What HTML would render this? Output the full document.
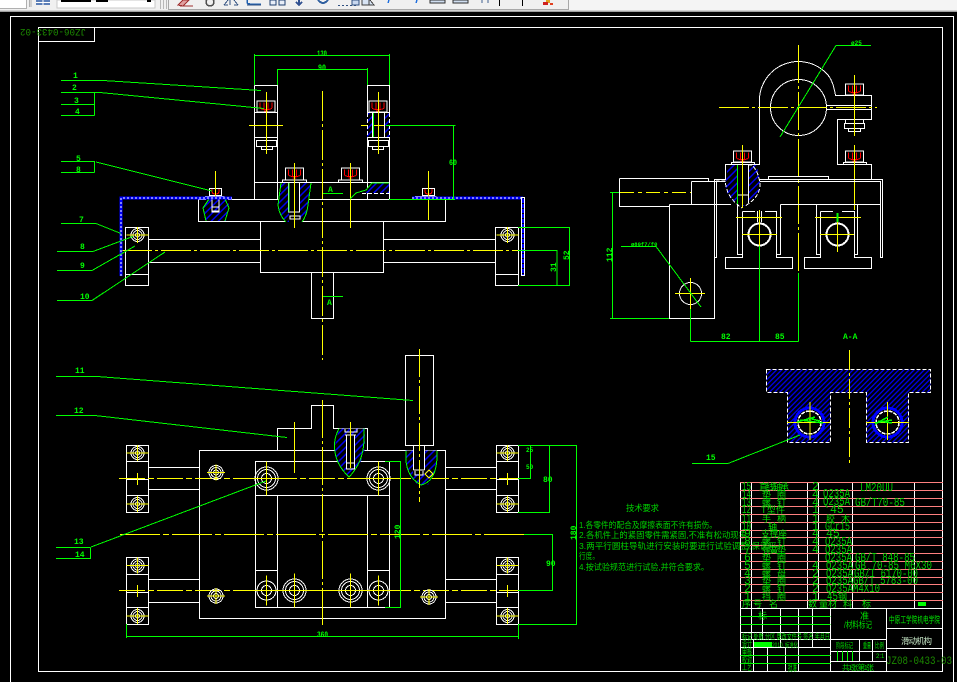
<!DOCTYPE html>
<html><head><meta charset="utf-8"><title>CAD</title>
<style>
html,body{margin:0;padding:0;background:#000;width:957px;height:682px;overflow:hidden}
svg{display:block;position:absolute;left:0;top:0}
.w{stroke:#fff;fill:none}
.g{stroke:#0f0;fill:none}
.y{stroke:#ff0;fill:none}
.r{stroke:#f00;fill:none}
.p{stroke:#ff8080;fill:none}
.bd{stroke:#fff;fill:none;stroke-dasharray:4 2}
text{font-family:"Liberation Mono","Noto Sans CJK SC",monospace;fill:#00e000;font-size:9px}
.c{font-family:"Liberation Sans","Noto Sans CJK SC",sans-serif;font-size:9px;fill:#00e000}
.t{font-size:8.5px;font-family:"Liberation Sans","Noto Sans CJK SC",sans-serif;fill:#00d000}
.s{font-size:8px;fill:#00ff00;font-weight:bold}
.m{font-size:11.5px;fill:#00d000}
</style></head><body>
<svg width="957" height="682" viewBox="0 0 957 682" xmlns="http://www.w3.org/2000/svg" shape-rendering="crispEdges">
<defs>
<pattern id="h" width="5" height="5" patternUnits="userSpaceOnUse" patternTransform="rotate(45)"><rect width="5" height="5" fill="#000"/><rect width="1.6" height="5" fill="#0000f0"/></pattern>
<pattern id="h2" width="3.6" height="3.6" patternUnits="userSpaceOnUse" patternTransform="rotate(45)"><rect width="3.6" height="3.6" fill="#000008"/><rect width="1.3" height="3.6" fill="#0000e0"/></pattern>
<g id="b"><rect class="w" x="-9" y="0" width="18" height="11"/><path class="r" d="M-6 1.500v5q0 2 6 2t6-2v-5M-2 1.500v7M2 1.500v7M-2 10h4"/></g>
<g id="bw"><rect class="w" x="-9" y="0" width="18" height="12"/><path class="w" d="M-12 14.500V12H12V14.500"/><path class="r" d="M-6 1.500v5q0 2 6 2t6-2v-5M-2 1.500v7M2 1.500v7M-2 10h4"/></g>
<g id="c1"><circle class="w" r="11.500"/><circle class="w" r="9"/><circle class="w" r="5"/><path class="y" d="M-17 0H17M0-17V17"/></g>
<g id="c2"><circle class="w" r="9.500"/><circle class="w" r="5"/><path class="y" d="M-17 0H17M0-15V15"/></g>
<g id="c3"><circle class="w" r="6.500"/><circle class="w" r="4.500"/><circle class="w" r="2"/><path class="y" d="M-11 0H11M0-8V8"/></g>
<g id="c4"><circle class="w" r="7"/><circle class="w" r="5"/><circle class="w" r="2.500"/><path class="y" d="M-9 0H9M0-8V8"/></g>
</defs>
<rect width="957" height="682" fill="#000"/>

<!-- toolbar -->
<rect width="957" height="11" fill="#f0f0f0"/>
<rect y="10" width="957" height="1" fill="#d0d0d0"/>
<rect y="11" width="957" height="1" fill="#a0a0a0"/>
<rect x="0" y="0" width="26" height="8" fill="#fff"/>
<path d="M26.500 0V8.500H0M29.500 0V7M31 0V7" stroke="#b0b0b0" fill="none"/>
<rect x="36" y="0" width="14" height="5" fill="#5c7fb8"/><path d="M36 2.500H50M43 0V5" stroke="#fff"/>
<rect x="57" y="0" width="98" height="8" fill="#fff" stroke="#c8c8c8"/>
<rect x="61" y="0" width="30" height="2" fill="#000"/><rect x="96" y="0" width="12" height="2" fill="#000"/><rect x="147" y="0" width="4" height="2" fill="#000"/>
<path d="M160.500 0V9M163.500 0V9M166.500 0V9" stroke="#b8b8b8"/>
<path d="M168.500 0V9.500H568.500V0" stroke="#a8a8a8" fill="#f0f0f0"/>
<rect x="569" y="0" width="388" height="10" fill="#f4f4f4"/>
<path d="M178 5l5-5h6l-6 6zM180 6h13" stroke="#a03030" fill="#e0a0a0"/>
<circle cx="210" cy="2" r="4" fill="none" stroke="#505050" stroke-width="1.500"/><path d="M224 5l4-5M230 0v5M234 0l4 5M224 5h4M234 5h4" stroke="#305080" fill="none"/>
<path d="M247 0v2q0 2 3 2h11" stroke="#2060b0" fill="none" stroke-width="1.500"/><path d="M247 5h14" stroke="#305080"/>
<rect x="270" y="0" width="6" height="5" fill="#e8eef8" stroke="#204070"/><rect x="279" y="0" width="6" height="5" fill="#e8eef8" stroke="#204070"/>
<path d="M299 0v4M296 2l3 3 3-3" stroke="#305090" fill="none" stroke-width="2"/>
<path d="M318 0q5 6 10 0" stroke="#3060a0" fill="none" stroke-width="2"/>
<path d="M338 5.500h20" stroke="#305080" stroke-dasharray="2 2"/><rect x="352" y="0" width="7" height="5" fill="#c8d8f0" stroke="#305080"/>
<path d="M362 0v5h7V0M370 0l4 5h-5" stroke="#404040" fill="#d8e4f4"/>
<path d="M389 0l-1 3M417 0l-1 3" stroke="#2070e0" stroke-width="1.500"/>
<rect x="430" y="0" width="15" height="3" fill="#d0def0" stroke="#303030"/><rect x="453" y="0" width="15" height="3" fill="#d0def0" stroke="#303030"/>
<path d="M482 0v3M488 0v3" stroke="#406090"/>
<path d="M499.500 0v6M522.500 0v6" stroke="#000"/>
<rect x="546" y="0" width="4" height="3" fill="#e0a020"/><rect x="543" y="2" width="5" height="3" fill="#d02020"/><rect x="550" y="3" width="3" height="2" fill="#e04020"/>

<!-- frames -->
<path class="w" d="M10.500 682V16.500H953.500V682"/>
<path class="w" d="M38.500 672V27.500H942.500V671.500H38.500"/>
<path class="w" d="M38.500 41.500H94.500V27.500"/>
<text x="0" y="0" transform="translate(86 29) rotate(180)" style="font-size:10.500px;fill:#1c8a00" textLength="66" lengthAdjust="spacingAndGlyphs">JZ06-0433-02</text>

<!-- TOP VIEW -->
<path class="w" d="M254.500 85.500H277.500V199.500M254.500 85.500V199.500M367.500 199.500V85.500H389.500V199.500M254.500 182.500H389.500"/>
<path class="w" d="M254.500 112.500H277.500M254.500 137.500H277.500M367.500 112.500H389.500M367.500 137.500H389.500"/>
<path class="w" d="M198.500 199.500H445.500V221.500H198.500ZM260.500 221.500H383.500V272.500H260.500ZM311.500 272.500H333.500V318.500H311.500Z"/>
<path class="w" d="M148.500 239.500H260.500M148.500 262.500H260.500M383.500 239.500H495.500M383.500 262.500H495.500"/>
<path class="w" d="M125.500 227.500H148.500V285.500H125.500ZM125.500 274.500H148.500M495.500 227.500H518.500V285.500H495.500ZM495.500 274.500H518.500"/>
<path class="w" d="M256.500 140.500h20v6h-20zM261.500 146.500v3h11v-3M368.500 140.500h20v6h-20zM372.500 146.500v3h11v-3"/>
<use href="#b" x="266" y="101"/><use href="#b" x="378" y="101"/>
<use href="#bw" x="294.500" y="168"/><use href="#bw" x="350.500" y="168"/>
<path class="y" d="M266.500 92V154M249 125.500H283M378.500 92V154M361 125.500H395M350.500 163V228"/>
<path class="w" d="M209.500 188.500h12v7h-12zM205.500 199V196.500H224V199M422.500 188.500h12v7h-12zM415.500 199V196.500H436V199"/>
<path class="r" d="M212 189v2q0 3 3.500 3t3.500-3v-2M425 189v2q0 3 3.500 3t3.500-3v-2"/>
<path class="y" d="M215.500 171V221M428.500 171V220"/>
<!-- hatched blobs -->
<path d="M203 205l4-7H228l1 8-3 15H206Z" fill="url(#h)"/>
<path class="g" d="M209 199L203 208 206 221M225 199L229 208 225 221"/>
<path class="w" d="M212 197V211h7V197M212 207h7v5h-7z"/>
<path d="M281 183H311L308 205q-1 10-6 17H286q-8-6-8-17Z" fill="url(#h)"/>
<path class="g" d="M281 183L278 205q1 10 8 17M311 183L308 205q-1 10-6 17"/>
<rect x="289" y="183" width="11" height="40" fill="#000"/>
<path class="w" d="M288.500 183V212h11V183M290 216h10v3h-10z"/>
<path class="y" d="M294.500 163V228"/>
<path class="g" d="M289 183V212"/>
<path d="M362 193L372 183H389V193Z" fill="url(#h)"/>
<path class="g" d="M350 199L356 193 366 190 372 183H389"/>
<path class="w" d="M362 193.500H389.500" stroke-dasharray="4 2"/>
<path d="M367 113H373V137H367ZM384 113H390V137H384Z" fill="url(#h)"/>
<path class="w" d="M372.500 112V137M384.500 112V137"/>
<path class="g" d="M373.500 113V137"/>
<path d="M367.500 113V137M389.500 113V137" stroke="#fff" stroke-dasharray="4 2" fill="none"/>
<!-- centre lines -->
<path class="y" d="M322.500 91V360" stroke-dasharray="30 3 3 3"/>
<path class="y" d="M122 250.500H520" stroke-dasharray="30 3 3 3"/>
<use href="#c3" x="137.500" y="235"/>
<use href="#c3" x="507.500" y="235"/>
<!-- blue dashed L -->
<path d="M121 276V198H232M412 198H523" stroke="#0000ff" stroke-width="3" fill="none"/>
<path d="M121 276V198H232M412 198H523" stroke="#fff" stroke-width="1" stroke-dasharray="2 2" fill="none"/>
<path d="M523 199V275" stroke="#0000ff" stroke-width="2" stroke-dasharray="4 1"/>
<path class="w" d="M521.500 197.500H524.500V275.500H521.500Z"/>

<!-- top view green -->
<path class="g" d="M254.500 54V85M389.500 54V85M254.500 55.500H389.500M277.500 69V85M367.500 68V85M277.500 69.500H367.500"/>
<path class="g" d="M61 80.500H103L261 90.500M61 92.500H100L264 108.500M61 104.500H94.500M61 115.500H94.500M94.500 92.500V115.500"/>
<path class="g" d="M61 161.500H95M61 172.500H94.500M94.500 161.500V172.500M96 162L212 191"/>
<path class="g" d="M61 223.500H96L121 233.500M57 251.500H93L133 236.500M57 270.500H92L135 246M57 300.500H92L165 252"/>
<path class="g" d="M323 193.500H343M323 296.500H343"/>
<path class="g" d="M386 125.500H455.500M453.500 125.500V199.500M389 199.500H455"/>
<text class="s" x="73" y="78">1</text><text class="s" x="72" y="90">2</text><text class="s" x="74" y="103">3</text><text class="s" x="75" y="114">4</text>
<text class="s" x="76" y="161">5</text><text class="s" x="76" y="172">8</text><text class="s" x="79" y="222">7</text>
<text class="s" x="80" y="249">8</text><text class="s" x="80" y="268">9</text><text class="s" x="80" y="299">10</text>
<text class="s" x="317" y="56" textLength="10" lengthAdjust="spacingAndGlyphs">130</text><text class="s" x="318" y="70" textLength="8" lengthAdjust="spacingAndGlyphs">90</text><text class="s" x="328" y="192">A</text><text class="s" x="327" y="305">A</text>
<text class="s" x="449" y="165" textLength="8" lengthAdjust="spacingAndGlyphs">60</text>

<!-- right dims of top view -->
<path class="g" d="M518 227.500H569.500V285.500H518M518 250.500H557V285"/>
<text class="s" transform="translate(569 260) rotate(-90)">52</text>
<text class="s" transform="translate(556 272) rotate(-90)">31</text>

<!-- RIGHT VIEW -->
<path class="w" d="M725.500 180V164.500H759.500V103A39 39 0 0 1 827 74Q833 80 835.500 95.500H871.500V119.500H837.500V164.500H871.500V179"/>
<circle class="w" cx="798.500" cy="107.500" r="28"/>
<path class="w" d="M827 105.500H871M827 109.500H871"/>
<path class="y" d="M719 107.500H877" stroke-dasharray="30 3 3 3"/>
<path class="y" d="M798.500 45V273" stroke-dasharray="38 3 3 3"/>
<path class="g" d="M780 137L836 45.500H871"/>
<text class="s" x="851" y="45" style="font-size:6px">ø25</text>
<use href="#b" x="854.500" y="84"/><use href="#b" x="854.500" y="151"/><use href="#b" x="742.500" y="151"/>
<path class="w" d="M845.500 119.500v4h18v-4M844.500 123.500h20v5h-20zM848.500 128.500v3h12v-3M843.500 164.500V162.500H866.500V164.500M731.500 164.500V162.500H754.500V164.500"/>
<path class="y" d="M854.500 75V136M854.500 145V210"/>
<!-- bed -->
<path class="w" d="M619.500 178.500H708.500V181.500M619.500 178.500V206.500H669.500M691.500 181.500V204.500M669.500 204.500H731M669.500 204.500V318.500H714.500V179.500H882.500V257.500H880.500V181.500H691.500M716.500 181.500V257.500H714.500"/>
<path class="w" d="M768.500 179V176.500H828.500V179M780.500 204.500H880.500"/>
<path class="y" d="M620 192.500H691" stroke-dasharray="14 4 4 4"/>
<!-- bearing blocks -->
<path class="w" d="M737.500 204.500V254.500H742.500M742.500 211.500V257.500H725.500V268.500H792.500V257.500H776.500V211.500H765M742.500 211.500H755M780.500 204.500V254.500H776.500"/>
<path class="w" d="M816.500 204.500V254.500H820.500M820.500 211.500V257.500H804.500V268.500H871.500V257.500H854.500V211.500H842M820.500 211.500H833M857.500 204.500V254.500H854.500"/>
<path class="w" d="M757.500 211V222M761.500 211V222"/>
<circle cx="759.500" cy="234.500" r="11" stroke="#fff" stroke-width="2" fill="none"/>
<circle cx="837.500" cy="234.500" r="11" stroke="#fff" stroke-width="2" fill="none"/>
<path class="y" d="M736 217.500H782M742 234.500H777M759.500 210V246M815 217.500H861M820 234.500H854M837.500 222V252"/>
<path d="M837.500 213V222" stroke="#0f0" stroke-width="2"/>
<!-- section on right -->
<path d="M728 165H757L760 183Q760 196 745 206H740Q725 198 725.500 183Z" fill="url(#h)"/>
<rect x="737" y="165" width="11" height="40" fill="#000"/>
<path class="bd" d="M725.500 183Q727 198 742 208M748 165H752Q759 172 760 185Q760 197 745 206M725.500 181H716"/>
<path class="w" d="M737.500 165V203M748.500 165V203M738 195h10"/>
<path class="g" d="M737.500 165V204"/>
<path class="y" d="M742.500 145V208"/>
<!-- bottom dims right -->
<path class="g" d="M759.500 246V341.500M798.500 273V341.500M690.500 309V341.500M690.500 341.500H798.500M610 192.500H619M612.500 192.500V318.500M610 318.500H669"/>
<circle class="w" cx="690.500" cy="293.500" r="11"/>
<path class="y" d="M675 293.500H705M690.500 278V309"/>
<path class="g" d="M621 246.500H656L701 307"/>
<text class="s" x="631" y="246" style="font-size:5.500px">ø80f7/f0</text>
<text class="s" transform="translate(612 262) rotate(-90)">112</text>
<text class="s" x="721" y="339">82</text><text class="s" x="775" y="339">85</text><text class="s" x="843" y="339">A-A</text>

<!-- A-A section -->
<path d="M766.500 369.500H930.500V392.500H908.500V442.500H866.500V392.500H830.500V442.500H787.500V392.500H766.500Z" fill="url(#h2)"/>
<path d="M766.500 369.500H930.500V392.500H908.500V442.500H866.500V392.500H830.500V442.500H787.500V392.500H766.500Z" class="w" stroke-dasharray="4 2"/>
<circle cx="809.500" cy="422.500" r="14.500" stroke="#0000ff" stroke-width="3" fill="#000"/>
<circle cx="887.500" cy="422.500" r="14.500" stroke="#0000ff" stroke-width="3" fill="#000"/>
<circle cx="809.500" cy="422.500" r="11.500" stroke="#fff" stroke-dasharray="4 1" fill="none" stroke-width="1.500"/>
<circle cx="887.500" cy="422.500" r="11.500" stroke="#fff" stroke-dasharray="4 1" fill="none" stroke-width="1.500"/>
<path class="y" d="M849.500 350V464" stroke-dasharray="20 3 3 3"/>
<path class="y" d="M787 422.500H830M810 402V440M866 422.500H909M887.500 402V440"/>
<path class="g" d="M797 422L815 417M800 420L823 423M808 418l12 3M875 424L888 417M875 423L892 420M878 421l14 2" stroke-width="1.500"/>
<path class="g" d="M692 463.500H728L800 435"/>
<text class="s" x="706" y="460">15</text>

<!-- BOTTOM VIEW -->
<path class="w" d="M199.500 450.500H445.500V618.500H199.500Z"/>
<path class="w" d="M277.500 450V428.500H311.500V405.500H333.500V428.500H367.500V450"/>
<path class="w" d="M255.500 461.500H389.500V607.500H255.500ZM255.500 495.500H389.500M277.500 495.500V607.500M367.500 495.500V607.500M255.500 570.500H277.500M367.500 570.500H389.500"/>
<path class="w" d="M148.500 467.500H199.500M148.500 489.500H199.500M148.500 579.500H199.500M148.500 602.500H199.500M445.500 467.500H496.500M445.500 489.500H496.500M445.500 579.500H496.500M445.500 602.500H496.500"/>
<path class="w" d="M126.500 445.500H148.500V512.500H126.500ZM126.500 461.500H148.500M126.500 479.500H148.500M126.500 495.500H148.500M126.500 557.500H148.500V624.500H126.500ZM126.500 574.500H148.500M126.500 592.500H148.500M126.500 607.500H148.500"/>
<path class="w" d="M496.500 445.500H518.500V512.500H496.500ZM496.500 461.500H518.500M496.500 479.500H518.500M496.500 495.500H518.500M496.500 557.500H518.500V624.500H496.500ZM496.500 574.500H518.500M496.500 592.500H518.500M496.500 607.500H518.500"/>
<path class="y" d="M119 478.500H518M119 590.500H518" stroke-dasharray="26 3 6 3"/>
<path class="y" d="M120 534.500H524" stroke-dasharray="40 3 6 3"/>
<path class="y" d="M137.500 473V485M137.500 585V597M507.500 473V485M507.500 585V597"/>
<use href="#c1" x="266.500" y="478.500"/><use href="#c1" x="378.500" y="478.500"/>
<use href="#c2" x="266.500" y="590.500"/><use href="#c1" x="294.500" y="590.500"/>
<use href="#c1" x="350.500" y="590.500"/><use href="#c2" x="378.500" y="590.500"/>
<use href="#c4" x="216" y="472.500"/><use href="#c4" x="216" y="596"/><use href="#c4" x="429" y="597"/>
<use href="#c3" x="137.500" y="453"/><use href="#c3" x="137.500" y="504"/><use href="#c3" x="137.500" y="565.500"/><use href="#c3" x="137.500" y="616"/>
<use href="#c3" x="507.500" y="453"/><use href="#c3" x="507.500" y="504"/><use href="#c3" x="507.500" y="565.500"/><use href="#c3" x="507.500" y="616"/>
<path class="y" d="M322.500 400V625" stroke-dasharray="38 3 3 3"/>
<path class="y" d="M294.500 422V473"/>
<!-- handle -->
<rect class="w" x="405.500" y="355.500" width="28" height="90" style="fill:#000"/>
<path class="w" d="M413.500 445.500V450H424.500V445.500"/>
<!-- blobs -->
<path d="M339 428.500H365V445Q364 462 351 476H348Q334 462 334.500 447Z" fill="url(#h)"/>
<path class="g" d="M339 428.500Q334 438 334.500 447 335 464 349 477 363 463 364 441V428.500"/>
<rect x="347" y="435" width="7" height="33" fill="#000"/>
<path class="w" d="M346.500 435V463H354.500V435M345 435H356M346.500 463h8v6h-8zM345 429V432H357V429"/>
<path class="y" d="M350.500 422V468"/>
<path d="M405.500 450.500H437Q439 470 428 485H418Q405 475 405.500 450.500Z" fill="url(#h)"/>
<path class="g" d="M406 451Q404 476 421 485 438 481 437 451"/>
<rect x="413" y="446" width="12" height="28" fill="#000"/>
<path class="w" d="M413.500 446V470M424.500 446V470M413.500 470H424.500M415 471V475H423V471"/>
<path class="y" d="M419.500 349V502" stroke-dasharray="28 3 3 3"/>
<path class="y" d="M429 470l4 4-4 4-4-4z"/>
<!-- bottom green -->
<path class="g" d="M56 376.500H97L413 400.500M56 415.500H95L287 437.500M56 547.500H90.500M56 558.500H90.500V547.500M91 547L266 481"/>
<path class="g" d="M126.500 624V638M126.500 636.500H518.500M518.500 624V639M385 461.500H401M400.500 461.500V607.500M385 607.500H401"/>
<path class="g" d="M518 445.500H576.500V624.500H518M530.500 446V478.500H518M518 512.500H549.500V445.500M524 534.500H553M552.500 534.500V590.500H518"/>
<text class="s" x="75" y="373">11</text><text class="s" x="74" y="413">12</text><text class="s" x="74" y="544">13</text><text class="s" x="75" y="557">14</text>
<text class="s" x="317" y="637" textLength="11" lengthAdjust="spacingAndGlyphs">360</text><text class="s" transform="translate(400 539) rotate(-90)">120</text>
<text class="s" transform="translate(576 540) rotate(-90)">180</text>
<text class="s" x="526" y="452" style="font-size:6px">25</text><text class="s" x="526" y="469" style="font-size:6px">50</text><text class="s" x="543" y="482">80</text><text class="s" x="546" y="566">90</text>

<!-- tech text -->
<text class="t" x="626" y="511" textLength="33">技术要求</text>
<text class="t" x="579" y="528" textLength="138" lengthAdjust="spacingAndGlyphs">1.各零件的配合及摩擦表面不许有损伤。</text>
<text class="t" x="579" y="538" textLength="168" lengthAdjust="spacingAndGlyphs">2.各机件上的紧固零件需紧固,不准有松动现象</text>
<text class="t" x="579" y="549" textLength="198" lengthAdjust="spacingAndGlyphs">3.两平行圆柱导轨进行安装时要进行试验调整,保证平</text>
<text class="t" x="579" y="559" textLength="20" lengthAdjust="spacingAndGlyphs">行度。</text>
<text class="t" x="579" y="570" textLength="130" lengthAdjust="spacingAndGlyphs">4.按试验规范进行试验,并符合要求。</text>

<!-- parts table -->
<path class="w" d="M751.500 482V608M807.500 482V608M818.500 482V600M852.500 482V608M914.500 482V608M740.500 482V672"/>
<path class="p" d="M740 482.500H943M740 490.500H943M740 498.500H943M740 506.500H943M740 514.500H943M740 522.500H943M740 530.500H943M740 537.500H943M740 545.500H943M740 553.500H943M740 561.500H943M740 569.500H943M740 577.500H943M740 584.500H943M740 592.500H943M740 600.500H943"/>
<text class="m" x="742" y="490" textLength="9" lengthAdjust="spacingAndGlyphs">15</text><text class="c" x="759" y="490" textLength="30">直线轴承</text><text class="m" x="812" y="490">2</text><text class="m" x="860" y="491" textLength="33" lengthAdjust="spacingAndGlyphs">LM20UU</text>
<text class="m" x="742" y="498" textLength="9" lengthAdjust="spacingAndGlyphs">14</text><text class="c" x="762" y="498" textLength="24">垫 圈</text><text class="m" x="812" y="498">4</text><text class="m" x="823" y="497" textLength="27" lengthAdjust="spacingAndGlyphs">Q235A</text>
<text class="m" x="742" y="506" textLength="9" lengthAdjust="spacingAndGlyphs">13</text><text class="c" x="762" y="506" textLength="24">螺 钉</text><text class="m" x="812" y="506">4</text><text class="m" x="823" y="505" textLength="27" lengthAdjust="spacingAndGlyphs">Q235A</text><text class="m" x="855" y="506" textLength="50" lengthAdjust="spacingAndGlyphs">GB/T70-85</text>
<text class="m" x="742" y="513" textLength="9" lengthAdjust="spacingAndGlyphs">12</text><text class="c" x="761" y="513" textLength="24">T型件</text><text class="m" x="812" y="513">1</text><text class="m" x="830" y="513">45</text>
<text class="m" x="742" y="522" textLength="9" lengthAdjust="spacingAndGlyphs">11</text><text class="c" x="762" y="522" textLength="24">手 柄</text><text class="m" x="812" y="522">1</text><text class="c" x="826" y="522" textLength="24">胶 木</text>
<text class="m" x="742" y="530" textLength="9" lengthAdjust="spacingAndGlyphs">10</text><text class="c" x="768" y="530">轴</text><text class="m" x="812" y="530">1</text><text class="m" x="825" y="530" textLength="25" lengthAdjust="spacingAndGlyphs">GCr15</text>
<text class="m" x="744" y="537">9</text><text class="c" x="761" y="537" textLength="26">支撑座</text><text class="m" x="812" y="537">4</text><text class="m" x="826" y="537">45</text>
<text class="m" x="744" y="545">8</text><text class="c" x="762" y="545" textLength="24">螺 钉</text><text class="m" x="812" y="545">4</text><text class="m" x="825" y="545" textLength="27" lengthAdjust="spacingAndGlyphs">Q235A</text>
<text class="m" x="744" y="553">7</text><text class="c" x="762" y="553" textLength="24">弹簧垫</text><text class="m" x="812" y="553">4</text><text class="m" x="825" y="553" textLength="27" lengthAdjust="spacingAndGlyphs">Q235A</text>
<text class="m" x="744" y="561">6</text><text class="c" x="762" y="561" textLength="24">垫 圈</text><text class="m" x="825" y="561" textLength="27" lengthAdjust="spacingAndGlyphs">Q235A</text><text class="m" x="855" y="561" textLength="60" lengthAdjust="spacingAndGlyphs">GB/T 848-85</text>
<text class="m" x="744" y="569">5</text><text class="c" x="762" y="569" textLength="24">螺 钉</text><text class="m" x="812" y="569">4</text><text class="m" x="826" y="569" textLength="27" lengthAdjust="spacingAndGlyphs">Q235A</text><text class="m" x="855" y="569" textLength="77" lengthAdjust="spacingAndGlyphs">GB 70-85 M6X30</text>
<text class="m" x="744" y="577">4</text><text class="c" x="762" y="577" textLength="24">螺 母</text><text class="m" x="812" y="577">2</text><text class="m" x="826" y="577" textLength="27" lengthAdjust="spacingAndGlyphs">Q235A</text><text class="m" x="854" y="577" textLength="64" lengthAdjust="spacingAndGlyphs">GB/T 6170-00</text>
<text class="m" x="744" y="584">3</text><text class="c" x="762" y="584" textLength="24">垫 圈</text><text class="m" x="812" y="584">2</text><text class="m" x="826" y="584" textLength="27" lengthAdjust="spacingAndGlyphs">Q235A</text><text class="m" x="853" y="584" textLength="65" lengthAdjust="spacingAndGlyphs">GB/T 5783-00</text>
<text class="m" x="744" y="592">2</text><text class="c" x="762" y="592" textLength="24">螺 钉</text><text class="m" x="812" y="592">2</text><text class="m" x="826" y="592" textLength="27" lengthAdjust="spacingAndGlyphs">Q235A</text><text class="m" x="853" y="592" textLength="27" lengthAdjust="spacingAndGlyphs">M4X10</text>
<text class="m" x="744" y="600">1</text><text class="c" x="762" y="600" textLength="24">挡 圈</text><text class="m" x="812" y="600">1</text><text class="m" x="827" y="600" textLength="11" lengthAdjust="spacingAndGlyphs">45</text><text class="c" x="838" y="600">钢</text>
<text class="c" x="742" y="607" textLength="36">序号 名</text><text class="c" x="808" y="607" textLength="20">数量</text><text class="c" x="828" y="607" textLength="24">材 料</text><text class="c" x="862" y="607">标</text>
<rect x="918" y="602" width="8" height="4" fill="#00ff00"/>

<!-- title block -->
<path class="w" d="M740.500 608.500H942.500M740.500 632.500H830.500M740.500 639.500H830.500M740.500 647.500H830.500M830.500 608.500V671.500M886.500 608.500V671.500"/>
<path class="w" d="M751.500 608.500V639.500M762.500 608.500V639.500M780.500 608.500V647.500M798.500 608.500V671.500M812.500 608.500V647.500M753.500 639.500V671.500M767.500 647.500V671.500M785.500 647.500V671.500"/>
<path class="w" d="M886.500 628.500H942.500M886.500 648.500H942.500M830.500 639.500H886.500M830.500 651.500H886.500M830.500 661.500H886.500M859.500 639.500V661.500M872.500 639.500V661.500M740.500 671.500H886.500"/>
<path class="g" d="M740.500 616.500H830.500M740.500 624.500H830.500M740.500 655.500H830.500M740.500 663.500H830.500M837.500 651V661M842.500 651V661M847.500 651V661M852.500 651V661"/>
<rect x="754" y="642" width="18" height="5" fill="#00ff00"/>
<text class="c" x="758" y="619">标</text><text class="c" x="860" y="619">准</text>
<text class="c" x="844" y="628" textLength="28" lengthAdjust="spacingAndGlyphs">/材料标记</text>
<text class="c" x="889" y="623" style="font-size:9px;fill:#00f000" textLength="51" lengthAdjust="spacingAndGlyphs">中原工学院机电学院</text>
<text class="c" x="901" y="644" style="font-size:8.500px;fill:#c8e8c8" textLength="31">滑动机构</text>
<text class="c" x="742" y="639" style="font-size:7.500px" textLength="88" lengthAdjust="spacingAndGlyphs">标记 处数 分区 更改文件号 签名 年月日</text>
<text class="c" x="742" y="647" textLength="10" lengthAdjust="spacingAndGlyphs">设计</text>
<text class="c" x="772" y="647" style="font-size:6.500px" textLength="12" lengthAdjust="spacingAndGlyphs">2010.</text><text class="c" x="785" y="647" textLength="13" style="font-size:6.500px" lengthAdjust="spacingAndGlyphs">标准化</text>
<text class="c" x="742" y="655" textLength="10" lengthAdjust="spacingAndGlyphs">审核</text><text class="c" x="742" y="663" textLength="10" lengthAdjust="spacingAndGlyphs">校对</text><text class="c" x="742" y="670" textLength="10" lengthAdjust="spacingAndGlyphs">工艺</text><text class="c" x="788" y="671" textLength="9" lengthAdjust="spacingAndGlyphs">批准</text>
<text class="c" x="836" y="648" style="font-size:7.500px" textLength="17" lengthAdjust="spacingAndGlyphs">阶段标记</text><text class="c" x="863" y="648" style="font-size:7.500px" textLength="8" lengthAdjust="spacingAndGlyphs">重量</text><text class="c" x="875" y="648" style="font-size:7.500px" textLength="9" lengthAdjust="spacingAndGlyphs">比例</text>
<text class="c" x="876" y="658" style="font-size:6px">2:1</text>
<text class="c" x="842" y="670" style="font-size:7.500px" textLength="32">共1张 第1张</text>
<text x="886" y="664" style="font-size:11px;fill:#1c8a00" textLength="66" lengthAdjust="spacingAndGlyphs">JZ08-0433-03</text>
</svg>
</body></html>
